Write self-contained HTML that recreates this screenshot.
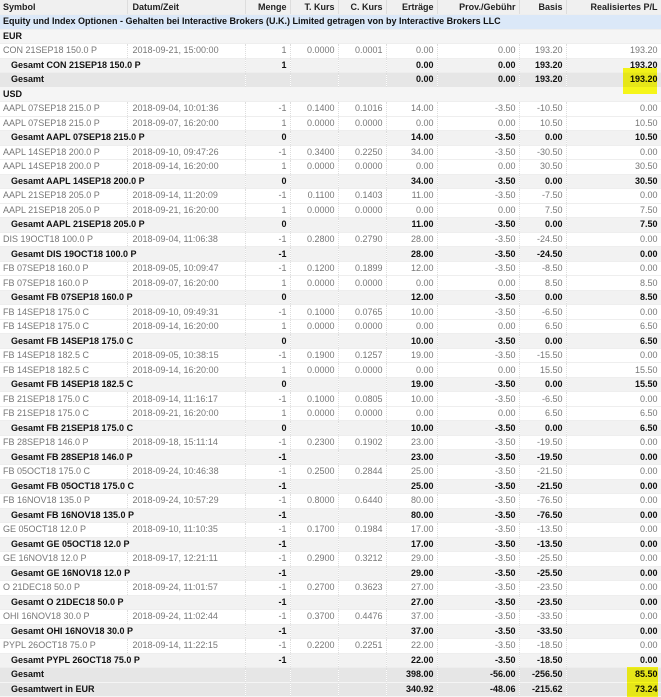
<!DOCTYPE html>
<html><head><meta charset="utf-8"><style>
*{margin:0;padding:0;box-sizing:border-box}
body{width:661px;height:697px;overflow:hidden;background:#fff;font-family:"Liberation Sans",Arial,sans-serif;font-size:9px;position:relative}
table{border-collapse:collapse;table-layout:fixed;width:661px}
td{height:14.52px;padding:0 3px;white-space:nowrap;overflow:hidden;border-right:1px dotted #ddd;border-bottom:1px solid #eee;color:#777;text-align:right;line-height:13px}
td:first-child,td.l{text-align:left}
td.l{padding-left:5px}
tr.h td{background:#f0f0f0;color:#222;font-weight:bold;border-right:1px solid #ddd}
tr.sec td{background:#dbe8f8;color:#111;font-weight:bold;text-align:left;border-right:none}
tr.cur td{background:#f5f5f5;color:#111;font-weight:bold;text-align:left;border-right:none}
tr.s td{background:#f2f2f2;color:#111;font-weight:bold}
tr.s td:first-child{padding-left:11px}
tr.g td{background:#e6e6e6;color:#111;font-weight:bold;border-bottom:1px solid #f5f5f5}
tr.g td:first-child{padding-left:11px}
.y{position:absolute;background:#ffff1a;mix-blend-mode:multiply}
</style></head><body>
<table>
<colgroup><col style="width:127px"><col style="width:118px"><col style="width:45px"><col style="width:48px"><col style="width:48px"><col style="width:51px"><col style="width:82px"><col style="width:47px"><col style="width:95px"></colgroup>
<tr class="h"><td>Symbol</td><td class="l">Datum/Zeit</td><td>Menge</td><td>T. Kurs</td><td>C. Kurs</td><td>Erträge</td><td>Prov./Gebühr</td><td>Basis</td><td>Realisiertes P/L</td></tr>
<tr class="sec"><td colspan="9">Equity und Index Optionen - Gehalten bei Interactive Brokers (U.K.) Limited getragen von by Interactive Brokers LLC</td></tr>
<tr class="cur"><td colspan="9">EUR</td></tr>
<tr><td>CON 21SEP18 150.0 P</td><td class="l">2018-09-21, 15:00:00</td><td>1</td><td>0.0000</td><td>0.0001</td><td>0.00</td><td>0.00</td><td>193.20</td><td>193.20</td></tr>
<tr class="s"><td colspan="2">Gesamt CON 21SEP18 150.0 P</td><td>1</td><td></td><td></td><td>0.00</td><td>0.00</td><td>193.20</td><td>193.20</td></tr>
<tr class="g"><td colspan="2">Gesamt</td><td></td><td></td><td></td><td>0.00</td><td>0.00</td><td>193.20</td><td>193.20</td></tr>
<tr class="cur"><td colspan="9">USD</td></tr>
<tr><td>AAPL 07SEP18 215.0 P</td><td class="l">2018-09-04, 10:01:36</td><td>-1</td><td>0.1400</td><td>0.1016</td><td>14.00</td><td>-3.50</td><td>-10.50</td><td>0.00</td></tr>
<tr><td>AAPL 07SEP18 215.0 P</td><td class="l">2018-09-07, 16:20:00</td><td>1</td><td>0.0000</td><td>0.0000</td><td>0.00</td><td>0.00</td><td>10.50</td><td>10.50</td></tr>
<tr class="s"><td colspan="2">Gesamt AAPL 07SEP18 215.0 P</td><td>0</td><td></td><td></td><td>14.00</td><td>-3.50</td><td>0.00</td><td>10.50</td></tr>
<tr><td>AAPL 14SEP18 200.0 P</td><td class="l">2018-09-10, 09:47:26</td><td>-1</td><td>0.3400</td><td>0.2250</td><td>34.00</td><td>-3.50</td><td>-30.50</td><td>0.00</td></tr>
<tr><td>AAPL 14SEP18 200.0 P</td><td class="l">2018-09-14, 16:20:00</td><td>1</td><td>0.0000</td><td>0.0000</td><td>0.00</td><td>0.00</td><td>30.50</td><td>30.50</td></tr>
<tr class="s"><td colspan="2">Gesamt AAPL 14SEP18 200.0 P</td><td>0</td><td></td><td></td><td>34.00</td><td>-3.50</td><td>0.00</td><td>30.50</td></tr>
<tr><td>AAPL 21SEP18 205.0 P</td><td class="l">2018-09-14, 11:20:09</td><td>-1</td><td>0.1100</td><td>0.1403</td><td>11.00</td><td>-3.50</td><td>-7.50</td><td>0.00</td></tr>
<tr><td>AAPL 21SEP18 205.0 P</td><td class="l">2018-09-21, 16:20:00</td><td>1</td><td>0.0000</td><td>0.0000</td><td>0.00</td><td>0.00</td><td>7.50</td><td>7.50</td></tr>
<tr class="s"><td colspan="2">Gesamt AAPL 21SEP18 205.0 P</td><td>0</td><td></td><td></td><td>11.00</td><td>-3.50</td><td>0.00</td><td>7.50</td></tr>
<tr><td>DIS 19OCT18 100.0 P</td><td class="l">2018-09-04, 11:06:38</td><td>-1</td><td>0.2800</td><td>0.2790</td><td>28.00</td><td>-3.50</td><td>-24.50</td><td>0.00</td></tr>
<tr class="s"><td colspan="2">Gesamt DIS 19OCT18 100.0 P</td><td>-1</td><td></td><td></td><td>28.00</td><td>-3.50</td><td>-24.50</td><td>0.00</td></tr>
<tr><td>FB 07SEP18 160.0 P</td><td class="l">2018-09-05, 10:09:47</td><td>-1</td><td>0.1200</td><td>0.1899</td><td>12.00</td><td>-3.50</td><td>-8.50</td><td>0.00</td></tr>
<tr><td>FB 07SEP18 160.0 P</td><td class="l">2018-09-07, 16:20:00</td><td>1</td><td>0.0000</td><td>0.0000</td><td>0.00</td><td>0.00</td><td>8.50</td><td>8.50</td></tr>
<tr class="s"><td colspan="2">Gesamt FB 07SEP18 160.0 P</td><td>0</td><td></td><td></td><td>12.00</td><td>-3.50</td><td>0.00</td><td>8.50</td></tr>
<tr><td>FB 14SEP18 175.0 C</td><td class="l">2018-09-10, 09:49:31</td><td>-1</td><td>0.1000</td><td>0.0765</td><td>10.00</td><td>-3.50</td><td>-6.50</td><td>0.00</td></tr>
<tr><td>FB 14SEP18 175.0 C</td><td class="l">2018-09-14, 16:20:00</td><td>1</td><td>0.0000</td><td>0.0000</td><td>0.00</td><td>0.00</td><td>6.50</td><td>6.50</td></tr>
<tr class="s"><td colspan="2">Gesamt FB 14SEP18 175.0 C</td><td>0</td><td></td><td></td><td>10.00</td><td>-3.50</td><td>0.00</td><td>6.50</td></tr>
<tr><td>FB 14SEP18 182.5 C</td><td class="l">2018-09-05, 10:38:15</td><td>-1</td><td>0.1900</td><td>0.1257</td><td>19.00</td><td>-3.50</td><td>-15.50</td><td>0.00</td></tr>
<tr><td>FB 14SEP18 182.5 C</td><td class="l">2018-09-14, 16:20:00</td><td>1</td><td>0.0000</td><td>0.0000</td><td>0.00</td><td>0.00</td><td>15.50</td><td>15.50</td></tr>
<tr class="s"><td colspan="2">Gesamt FB 14SEP18 182.5 C</td><td>0</td><td></td><td></td><td>19.00</td><td>-3.50</td><td>0.00</td><td>15.50</td></tr>
<tr><td>FB 21SEP18 175.0 C</td><td class="l">2018-09-14, 11:16:17</td><td>-1</td><td>0.1000</td><td>0.0805</td><td>10.00</td><td>-3.50</td><td>-6.50</td><td>0.00</td></tr>
<tr><td>FB 21SEP18 175.0 C</td><td class="l">2018-09-21, 16:20:00</td><td>1</td><td>0.0000</td><td>0.0000</td><td>0.00</td><td>0.00</td><td>6.50</td><td>6.50</td></tr>
<tr class="s"><td colspan="2">Gesamt FB 21SEP18 175.0 C</td><td>0</td><td></td><td></td><td>10.00</td><td>-3.50</td><td>0.00</td><td>6.50</td></tr>
<tr><td>FB 28SEP18 146.0 P</td><td class="l">2018-09-18, 15:11:14</td><td>-1</td><td>0.2300</td><td>0.1902</td><td>23.00</td><td>-3.50</td><td>-19.50</td><td>0.00</td></tr>
<tr class="s"><td colspan="2">Gesamt FB 28SEP18 146.0 P</td><td>-1</td><td></td><td></td><td>23.00</td><td>-3.50</td><td>-19.50</td><td>0.00</td></tr>
<tr><td>FB 05OCT18 175.0 C</td><td class="l">2018-09-24, 10:46:38</td><td>-1</td><td>0.2500</td><td>0.2844</td><td>25.00</td><td>-3.50</td><td>-21.50</td><td>0.00</td></tr>
<tr class="s"><td colspan="2">Gesamt FB 05OCT18 175.0 C</td><td>-1</td><td></td><td></td><td>25.00</td><td>-3.50</td><td>-21.50</td><td>0.00</td></tr>
<tr><td>FB 16NOV18 135.0 P</td><td class="l">2018-09-24, 10:57:29</td><td>-1</td><td>0.8000</td><td>0.6440</td><td>80.00</td><td>-3.50</td><td>-76.50</td><td>0.00</td></tr>
<tr class="s"><td colspan="2">Gesamt FB 16NOV18 135.0 P</td><td>-1</td><td></td><td></td><td>80.00</td><td>-3.50</td><td>-76.50</td><td>0.00</td></tr>
<tr><td>GE 05OCT18 12.0 P</td><td class="l">2018-09-10, 11:10:35</td><td>-1</td><td>0.1700</td><td>0.1984</td><td>17.00</td><td>-3.50</td><td>-13.50</td><td>0.00</td></tr>
<tr class="s"><td colspan="2">Gesamt GE 05OCT18 12.0 P</td><td>-1</td><td></td><td></td><td>17.00</td><td>-3.50</td><td>-13.50</td><td>0.00</td></tr>
<tr><td>GE 16NOV18 12.0 P</td><td class="l">2018-09-17, 12:21:11</td><td>-1</td><td>0.2900</td><td>0.3212</td><td>29.00</td><td>-3.50</td><td>-25.50</td><td>0.00</td></tr>
<tr class="s"><td colspan="2">Gesamt GE 16NOV18 12.0 P</td><td>-1</td><td></td><td></td><td>29.00</td><td>-3.50</td><td>-25.50</td><td>0.00</td></tr>
<tr><td>O 21DEC18 50.0 P</td><td class="l">2018-09-24, 11:01:57</td><td>-1</td><td>0.2700</td><td>0.3623</td><td>27.00</td><td>-3.50</td><td>-23.50</td><td>0.00</td></tr>
<tr class="s"><td colspan="2">Gesamt O 21DEC18 50.0 P</td><td>-1</td><td></td><td></td><td>27.00</td><td>-3.50</td><td>-23.50</td><td>0.00</td></tr>
<tr><td>OHI 16NOV18 30.0 P</td><td class="l">2018-09-24, 11:02:44</td><td>-1</td><td>0.3700</td><td>0.4476</td><td>37.00</td><td>-3.50</td><td>-33.50</td><td>0.00</td></tr>
<tr class="s"><td colspan="2">Gesamt OHI 16NOV18 30.0 P</td><td>-1</td><td></td><td></td><td>37.00</td><td>-3.50</td><td>-33.50</td><td>0.00</td></tr>
<tr><td>PYPL 26OCT18 75.0 P</td><td class="l">2018-09-14, 11:22:15</td><td>-1</td><td>0.2200</td><td>0.2251</td><td>22.00</td><td>-3.50</td><td>-18.50</td><td>0.00</td></tr>
<tr class="s"><td colspan="2">Gesamt PYPL 26OCT18 75.0 P</td><td>-1</td><td></td><td></td><td>22.00</td><td>-3.50</td><td>-18.50</td><td>0.00</td></tr>
<tr class="g"><td colspan="2">Gesamt</td><td></td><td></td><td></td><td>398.00</td><td>-56.00</td><td>-256.50</td><td>85.50</td></tr>
<tr class="g"><td colspan="2">Gesamtwert in EUR</td><td></td><td></td><td></td><td>340.92</td><td>-48.06</td><td>-215.62</td><td>73.24</td></tr>
</table>
<div class="y" style="left:623px;top:68px;width:34px;height:26px"></div>
<div class="y" style="left:627px;top:667px;width:31px;height:30px"></div>
</body></html>
